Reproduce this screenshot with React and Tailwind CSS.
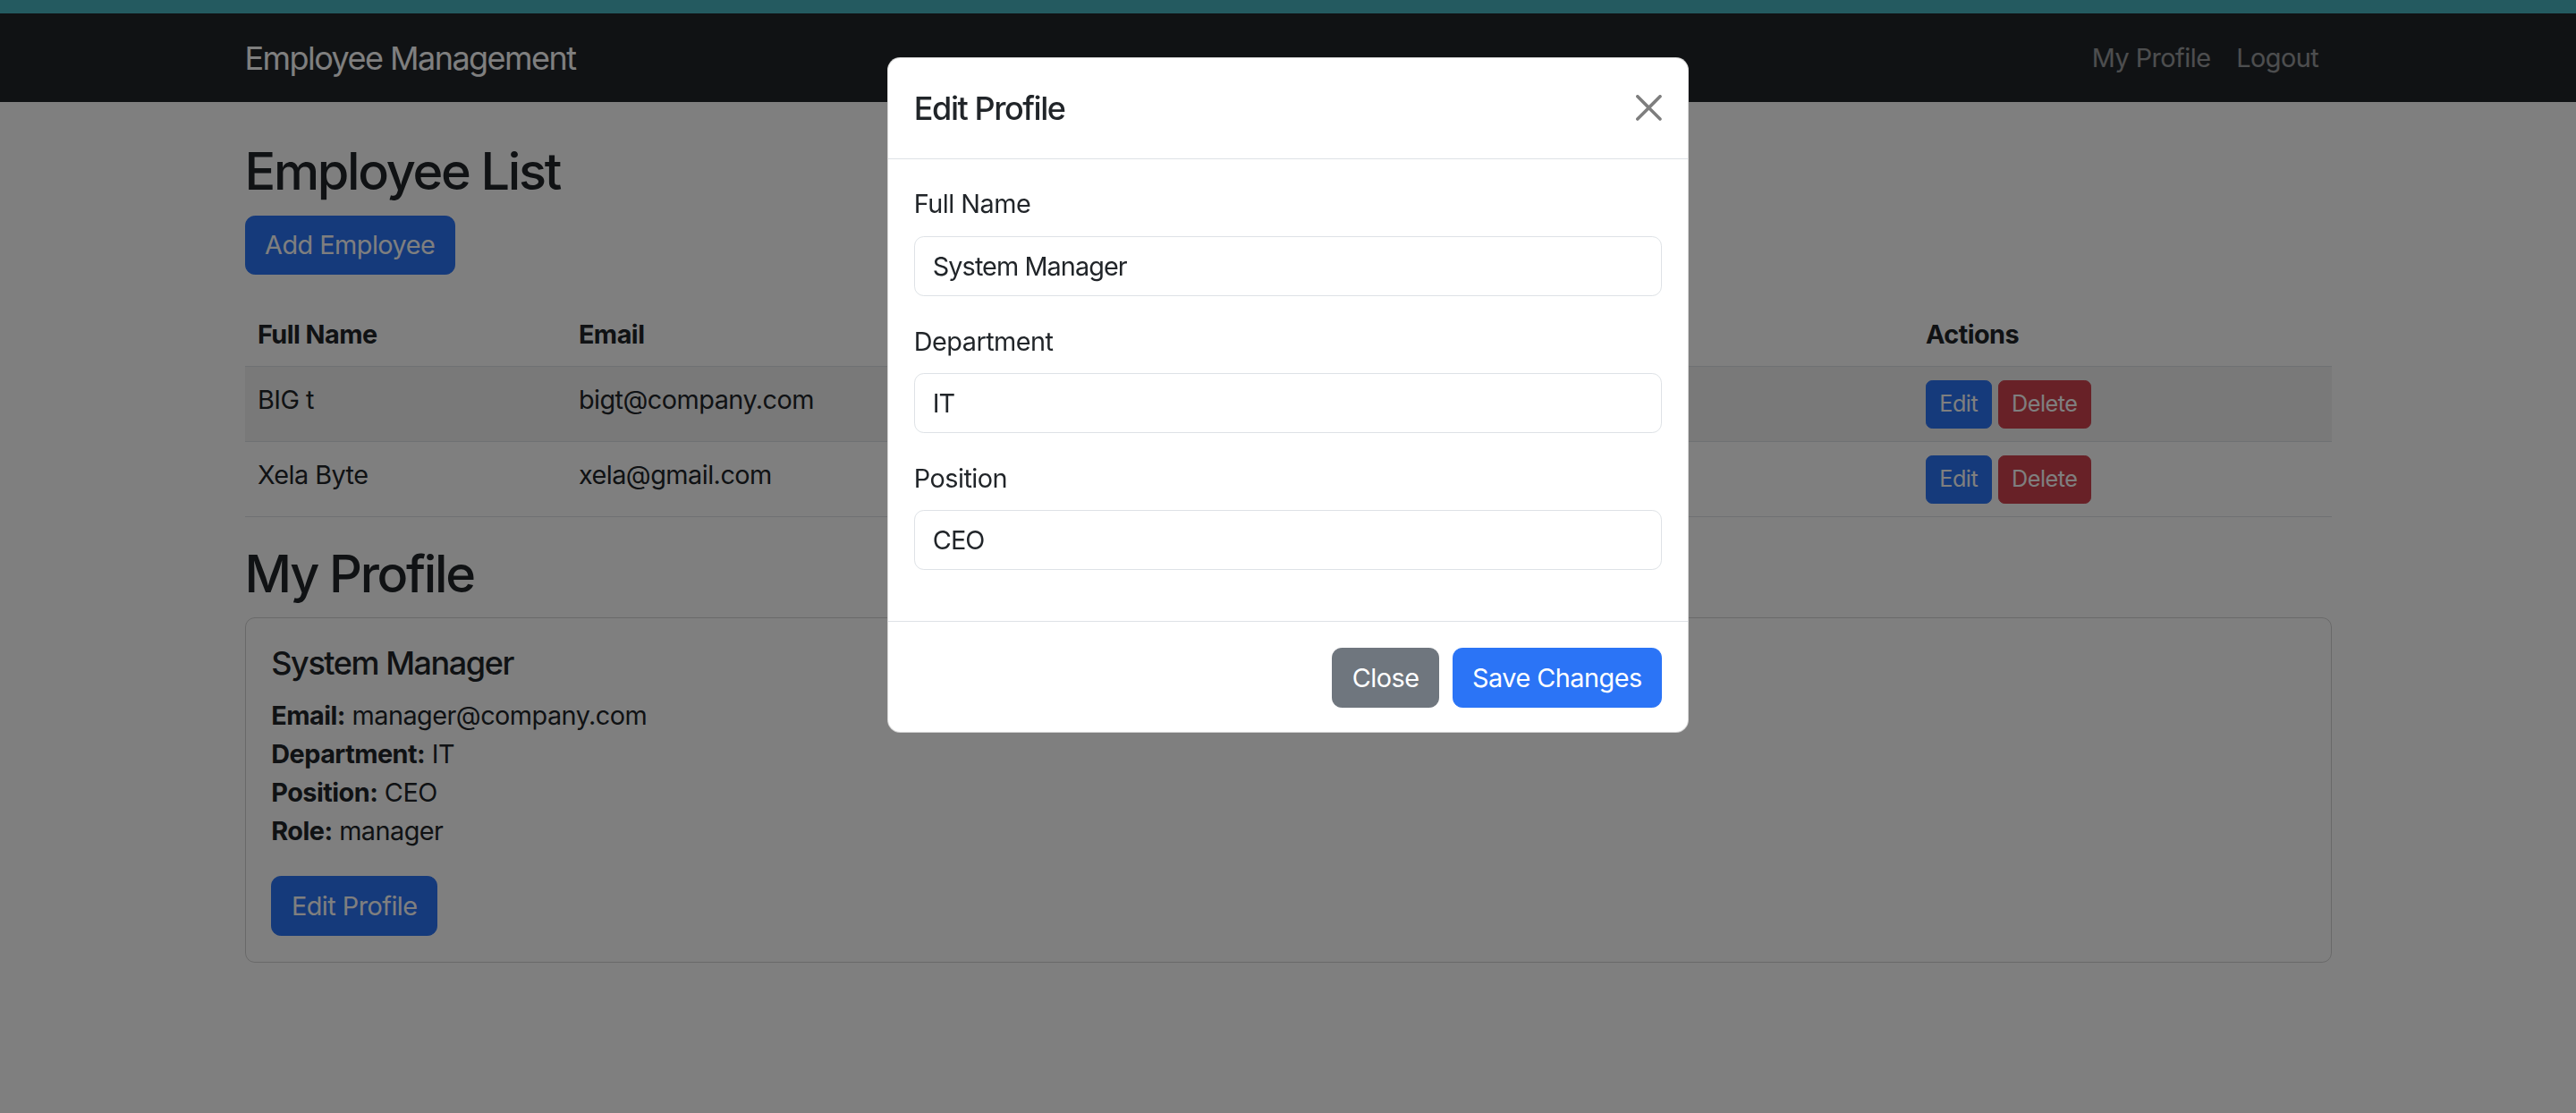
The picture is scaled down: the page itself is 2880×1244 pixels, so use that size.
import React from 'react';

const employees = [
  { name: 'BIG t', email: 'bigt@company.com', department: 'Sales', position: 'Manager' },
  { name: 'Xela Byte', email: 'xela@gmail.com', department: 'IT', position: 'Developer' },
];

const profile = {
  name: 'System Manager',
  email: 'manager@company.com',
  department: 'IT',
  position: 'CEO',
  role: 'manager',
};

const btn = 'border-[1.8px] text-white text-[28.8px] leading-[1.5] px-[21.6px] py-[10.8px] rounded-[10.8px]';
const btnSm = 'border-[1.8px] text-white text-[25.2px] leading-[1.5] px-[14.4px] py-[7.2px] rounded-[7.2px]';

function Field({ label, value }) {
  return (
    <div className="mb-[28.8px]">
      <label className="block mb-[14.4px] text-[28.8px] leading-[1.5]">{label}</label>
      <input
        readOnly
        value={value}
        className="block w-full border-[1.8px] border-[#dee2e6] rounded-[10.8px] px-[20px] py-[10.8px] text-[28.8px] leading-[1.5] tracking-[-0.032em] text-[#212529] outline-none"
      />
    </div>
  );
}

export default function App() {
  return (
    <div className="relative min-h-screen bg-white text-[#212529] tracking-[-0.032em] font-['Inter','Liberation_Sans',sans-serif]">
      <div className="h-[15px] bg-[#245a60]" />

      {/* Navbar */}
      <nav className="bg-[#212529] h-[99px] flex items-center">
        <div className="w-[2333px] mx-auto flex items-center justify-between">
          <span className="text-[36px] leading-[1.5] tracking-[-0.043em] text-white">Employee Management</span>
          <div className="flex text-[28.8px] leading-[1.5] text-white/55">
            <a className="px-[14.4px]">My Profile</a>
            <a className="px-[14.4px]">Logout</a>
          </div>
        </div>
      </nav>

      <main className="w-[2333px] mx-auto pt-[43px]">
        <h2 className="text-[57.6px] leading-[1.2] font-medium tracking-[-0.04em] mb-[14.4px]">Employee List</h2>
        <button className={`${btn} bg-[#2b74f6] border-[#2b74f6] mb-[30px]`}>Add Employee</button>

        <table className="w-full table-fixed text-left text-[28.8px] leading-[1.5] mb-[28.8px]">
          <thead>
            <tr className="border-b-[1.8px] border-[#dee2e6]">
              <th className="w-[359px] p-[14.4px] font-bold">Full Name</th>
              <th className="w-[502px] p-[14.4px] font-bold">Email</th>
              <th className="w-[502px] p-[14.4px] font-bold">Department</th>
              <th className="w-[502px] p-[14.4px] font-bold">Position</th>
              <th className="p-[14.4px] font-bold">Actions</th>
            </tr>
          </thead>
          <tbody>
            {employees.map((e, i) => (
              <tr key={e.email} className={`border-b-[1.8px] border-[#dee2e6] align-top ${i % 2 === 0 ? 'bg-black/5' : ''}`}>
                <td className="p-[14.4px]">{e.name}</td>
                <td className="p-[14.4px]">{e.email}</td>
                <td className="p-[14.4px]">{e.department}</td>
                <td className="p-[14.4px]">{e.position}</td>
                <td className="p-[14.4px]">
                  <div className="flex">
                    <button className={`${btnSm} bg-[#2b74f6] border-[#2b74f6] mr-[7.2px]`}>Edit</button>
                    <button className={`${btnSm} bg-[#d1434f] border-[#d1434f]`}>Delete</button>
                  </div>
                </td>
              </tr>
            ))}
          </tbody>
        </table>

        <h2 className="text-[57.6px] leading-[1.2] font-medium tracking-[-0.04em] mb-[14.4px]">My Profile</h2>
        <div className="border-[1.8px] border-black/[.175] rounded-[10.8px] p-[28.8px]">
          <h5 className="text-[36px] leading-[1.2] font-medium tracking-[-0.04em] mb-[14.4px]">{profile.name}</h5>
          <div className="text-[28.8px] leading-[1.5] mb-[28.8px]">
            <div><strong className="font-bold">Email:</strong> {profile.email}</div>
            <div><strong className="font-bold">Department:</strong> {profile.department}</div>
            <div><strong className="font-bold">Position:</strong> {profile.position}</div>
            <div><strong className="font-bold">Role:</strong> {profile.role}</div>
          </div>
          <button className={`${btn} bg-[#2b74f6] border-[#2b74f6]`}>Edit Profile</button>
        </div>
      </main>

      {/* Modal backdrop */}
      <div className="fixed inset-x-0 top-[15px] bottom-0 bg-black/50" />

      {/* Modal */}
      <div className="absolute inset-x-0 top-[15px] flex justify-center pt-[49px]">
        <div className="w-[896px] bg-white rounded-[14.4px] border-[1.8px] border-black/[.175] overflow-hidden">
          <div className="flex items-center justify-between px-[28.8px] py-[27px] border-b-[1.8px] border-[#dee2e6]">
            <h5 className="text-[36px] leading-[1.5] font-medium tracking-[-0.04em]">Edit Profile</h5>
            <button className="p-[14.4px] -mr-[14.4px] opacity-50">
              <svg viewBox="0 0 16 16" className="w-[28.8px] h-[28.8px]" fill="#000">
                <path d="M.293.293a1 1 0 0 1 1.414 0L8 6.586 14.293.293a1 1 0 1 1 1.414 1.414L9.414 8l6.293 6.293a1 1 0 0 1-1.414 1.414L8 9.414l-6.293 6.293a1 1 0 0 1-1.414-1.414L6.586 8 .293 1.707a1 1 0 0 1 0-1.414" />
              </svg>
            </button>
          </div>
          <div className="px-[28.8px] pt-[28.8px] pb-[28px]">
            <Field label="Full Name" value={profile.name} />
            <Field label="Department" value={profile.department} />
            <Field label="Position" value={profile.position} />
          </div>
          <div className="flex justify-end gap-[14.4px] px-[28.8px] pt-[29px] pb-[27px] border-t-[1.8px] border-[#dee2e6]">
            <button className={`${btn} bg-[#6f767e] border-[#6f767e]`}>Close</button>
            <button className={`${btn} bg-[#2b74f6] border-[#2b74f6]`}>Save Changes</button>
          </div>
        </div>
      </div>
    </div>
  );
}
